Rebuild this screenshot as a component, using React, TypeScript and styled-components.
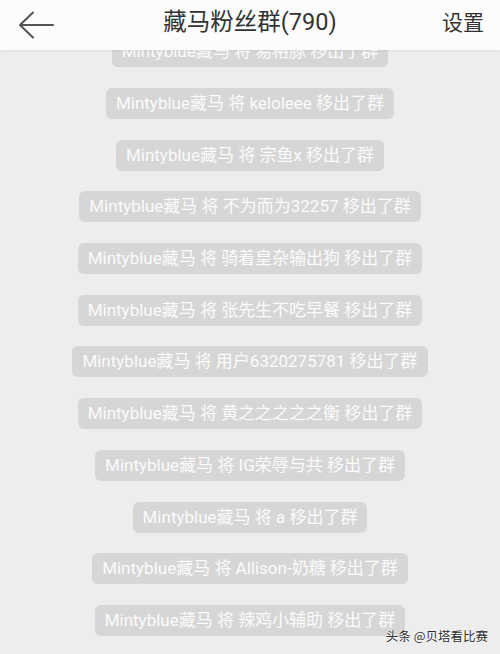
import React from "react";
import styled, { createGlobalStyle } from "styled-components";

const GlobalStyle = createGlobalStyle`
  html, body {
    margin: 0;
    padding: 0;
    background: #ededed;
  }
  * { box-sizing: border-box; }
`;

const Page = styled.div`
  position: relative;
  width: 500px;
  height: 654px;
  overflow: hidden;
  background: #ededed;
  font-family: Roboto, "Noto Sans CJK SC", sans-serif;
  display: flex;
  flex-direction: column;
`;

const Header = styled.header`
  position: relative;
  z-index: 2;
  flex: 0 0 50px;
  height: 50px;
  background: #fcfcfc;
  box-shadow: 0 1px 2px rgba(0, 0, 0, 0.06);
  display: grid;
  grid-template-columns: 80px 1fr 80px;
  align-items: center;
`;

const BackButton = styled.div`
  display: flex;
  align-items: center;
  padding-left: 18px;
  height: 100%;
`;

const Title = styled.h1`
  margin: 0;
  text-align: center;
  font-size: 23.5px;
  font-weight: 400;
  color: #333;
  line-height: 1;
  padding-bottom: 4px;
`;

const Settings = styled.div`
  text-align: right;
  padding-right: 16px;
  font-size: 21px;
  color: #333;
  line-height: 1;
  padding-bottom: 4px;
`;

const MessageList = styled.div`
  display: flex;
  flex-direction: column;
  align-items: center;
  gap: 20.7px;
  margin-top: -13.7px;
`;

const Notice = styled.div`
  height: 31px;
  line-height: 31px;
  padding: 0 10px;
  border-radius: 6px;
  background: #d6d6d6;
  color: #fbfbfb;
  font-size: 17px;
  white-space: nowrap;
`;

const Watermark = styled.div`
  position: absolute;
  right: 12px;
  bottom: 9px;
  font-size: 12.5px;
  color: #2b2b2b;
  font-family: "Noto Sans CJK SC", sans-serif;
  text-shadow: 0 0 2px #fff, 0 0 2px #fff, 0 0 1px #fff;
  z-index: 3;
`;

const removed = [
  "易格豚",
  "keloleee",
  "宗鱼x",
  "不为而为32257",
  "骑着皇杂输出狗",
  "张先生不吃早餐",
  "用户6320275781",
  "黄之之之之之衡",
  "IG荣辱与共",
  "a",
  "Allison-奶糖",
  "辣鸡小辅助",
];

export default function App() {
  return (
    <Page>
      <GlobalStyle />
      <Header>
        <BackButton>
          <svg width="36" height="28" viewBox="0 0 36 28" fill="none">
            <path
              d="M15 1.5 L2 14 L15 26.5 M2 14 H35"
              stroke="#555"
              strokeWidth="2"
              strokeLinecap="round"
              strokeLinejoin="round"
            />
          </svg>
        </BackButton>
        <Title>藏马粉丝群(790)</Title>
        <Settings>设置</Settings>
      </Header>
      <MessageList>
        {removed.map((name, i) => (
          <Notice key={i}>Mintyblue藏马 将 {name} 移出了群</Notice>
        ))}
      </MessageList>
      <Watermark>头条 @贝塔看比赛</Watermark>
    </Page>
  );
}
